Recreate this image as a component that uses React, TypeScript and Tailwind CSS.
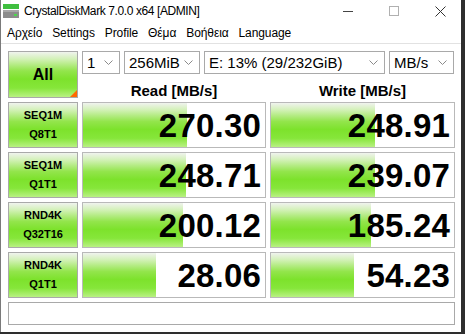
import { ReactNode } from "react";

type Result = {
  top: string;
  bottom: string;
  read: string;
  readPct: number;
  write: string;
  writePct: number;
};

const results: Result[] = [
  { top: "SEQ1M", bottom: "Q8T1", read: "270.30", readPct: 57, write: "248.91", writePct: 56.6 },
  { top: "SEQ1M", bottom: "Q1T1", read: "248.71", readPct: 56.6, write: "239.07", writePct: 56.6 },
  { top: "RND4K", bottom: "Q32T16", read: "200.12", readPct: 55, write: "185.24", writePct: 54.4 },
  { top: "RND4K", bottom: "Q1T1", read: "28.06", readPct: 40, write: "54.23", writePct: 45.6 },
];

const menu = ["Αρχείο", "Settings", "Profile", "Θέμα", "Βοήθεια", "Language"];

const greenFill =
  "bg-[linear-gradient(to_bottom,#f0f3ee_0%,#d2f1b6_16%,#93e54c_42%,#7de22c_60%,#86e63a_80%,#b9f183_100%)]";

function Chevron() {
  return (
    <svg width="9" height="5" viewBox="0 0 9 5" className="shrink-0">
      <path d="M0.5 0.5 L4.5 4.5 L8.5 0.5" fill="none" stroke="#8a8a8a" strokeWidth="1" />
    </svg>
  );
}

function Combo({ w, children }: { w: string; children: ReactNode }) {
  return (
    <div
      className={`${w} h-[23px] flex items-center justify-between pl-[4px] pr-[6px] border border-[#a9a9a9] bg-white text-[15px] text-black leading-none`}
    >
      <span>{children}</span>
      <Chevron />
    </div>
  );
}

function LabelCell({ top, bottom }: { top: string; bottom: string }) {
  return (
    <div
      className={`h-[46px] border border-[#a9a9a9] ${greenFill} flex flex-col items-center justify-center gap-[8px] text-[11px] font-bold leading-none text-black`}
    >
      <span>{top}</span>
      <span>{bottom}</span>
    </div>
  );
}

function ValueCell({ value, pct }: { value: string; pct: number }) {
  return (
    <div className="relative h-[46px] border border-[#b9b9b9] bg-white flex items-center justify-end pr-[4px]">
      <div className={`absolute inset-y-0 left-0 ${greenFill}`} style={{ width: `${pct}%` }} />
      <span className="relative text-[33px] font-bold leading-none tracking-[0.2px] text-black">{value}</span>
    </div>
  );
}

function AppIcon() {
  return (
    <svg width="17" height="16" viewBox="0 0 17 16">
      <rect x="0" y="1" width="16" height="5" fill="#3fbf3f" />
      <rect x="0" y="7" width="16" height="8" fill="#8c8c8c" />
      <rect x="0" y="7" width="16" height="2" fill="#a8a8a8" />
      <rect x="11" y="11" width="3" height="2" fill="#4cd94c" />
    </svg>
  );
}

export default function App() {
  return (
    <div
      className="w-[465px] h-[334px] bg-[#2e2e2e] overflow-hidden"
      style={{ fontFamily: '"Liberation Sans", Arial, sans-serif' }}
    >
      <div className="w-[461px] h-[332px] bg-white border-l border-[#7a7a7a] flex flex-col">
        {/* title bar */}
        <div className="h-[22px] flex items-center pl-[2px] pr-[15px]">
          <AppIcon />
          <span className="ml-[4px] text-[12px] tracking-[-0.4px] text-black">
            CrystalDiskMark 7.0.0 x64 [ADMIN]
          </span>
          <div className="ml-auto flex items-center gap-[35px]">
            <svg width="11" height="10" viewBox="0 0 11 10">
              <path d="M0 5.5 H10" stroke="#444" strokeWidth="1" />
            </svg>
            <svg width="11" height="10" viewBox="0 0 11 10">
              <rect x="0.5" y="0.5" width="9" height="9" fill="none" stroke="#b0b0b0" strokeWidth="1" />
            </svg>
            <svg width="11" height="11" viewBox="0 0 11 11">
              <path d="M0.5 0.5 L10.5 10.5 M10.5 0.5 L0.5 10.5" stroke="#333" strokeWidth="1" />
            </svg>
          </div>
        </div>

        {/* menu bar */}
        <div className="h-[22px] border-b border-[#e2e2e2] flex items-center pl-[6px] gap-[10px] text-[12px] tracking-[-0.1px] text-black">
          {menu.map((m) => (
            <span key={m}>{m}</span>
          ))}
        </div>

        {/* main panel */}
        <div className="pl-[7px] pt-[7px] flex flex-col gap-[4px]">
          <div className="flex gap-[4px] h-[47px]">
            <div
              className={`relative w-[70px] h-[47px] border border-[#a9a9a9] ${greenFill} flex items-center justify-center text-[16px] font-bold text-black`}
            >
              All
              <div className="absolute right-0 bottom-0 w-0 h-0 border-l-[7px] border-l-transparent border-b-[7px] border-b-[#ff6a00]" />
            </div>
            <div className="flex flex-col h-[47px]">
              <div className="flex gap-[4px]">
                <Combo w="w-[38px]">1</Combo>
                <Combo w="w-[76px]">256MiB</Combo>
                <Combo w="w-[181px]">E: 13% (29/232GiB)</Combo>
                <Combo w="w-[65px]">MB/s</Combo>
              </div>
              <div className="flex gap-[4px] flex-1 items-center text-[15px] leading-none font-bold text-black pt-[8px]">
                <div className="w-[184px] text-center">Read [MB/s]</div>
                <div className="w-[185px] text-center">Write [MB/s]</div>
              </div>
            </div>
          </div>

          {results.map((r) => (
            <div key={r.top + r.bottom} className="flex gap-[4px]">
              <div className="w-[70px]">
                <LabelCell top={r.top} bottom={r.bottom} />
              </div>
              <div className="w-[184px]">
                <ValueCell value={r.read} pct={r.readPct} />
              </div>
              <div className="w-[185px]">
                <ValueCell value={r.write} pct={r.writePct} />
              </div>
            </div>
          ))}

          <div className="w-[447px] h-[23px] border border-[#a9a9a9] bg-white" />
        </div>
      </div>
    </div>
  );
}
